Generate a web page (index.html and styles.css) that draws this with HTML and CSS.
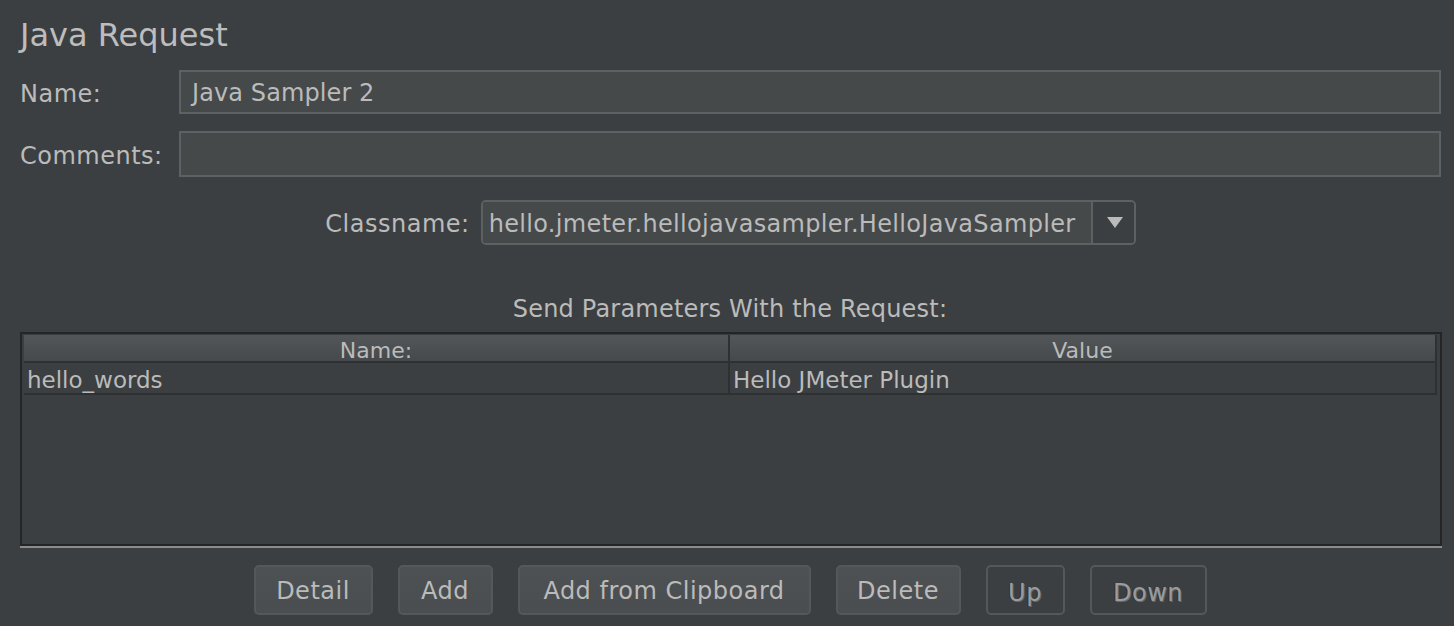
FILE: index.html
```html
<!DOCTYPE html>
<html lang="en">
<head>
<meta charset="utf-8">
<title>Java Request</title>
<link rel="stylesheet" href="styles.css">
</head>
<body>
<div class="page">
  <h1 class="title">Java Request</h1>
  <div class="field-row first">
    <label class="field-label">Name:</label>
    <div class="text-input">Java Sampler 2</div>
  </div>
  <div class="field-row second">
    <label class="field-label">Comments:</label>
    <div class="text-input tall"></div>
  </div>
  <div class="class-row">
    <label class="field-label">Classname:</label>
    <div class="combo">
      <div class="combo-value">hello.jmeter.hellojavasampler.HelloJavaSampler</div>
      <div class="combo-arrow">
        <svg width="16" height="11" viewBox="0 0 16 11"><polygon points="0,0 16,0 8,11" fill="#bbbbbb"/></svg>
      </div>
    </div>
  </div>
  <div class="section-title">Send Parameters With the Request:</div>
  <div class="table">
    <div class="thead">
      <div class="th">Name:</div>
      <div class="th">Value</div>
    </div>
    <div class="tr">
      <div class="td">hello_words</div>
      <div class="td">Hello JMeter Plugin</div>
    </div>
  </div>
  <div class="buttons">
    <div class="btn w-detail">Detail</div>
    <div class="btn w-add">Add</div>
    <div class="btn w-clip">Add from Clipboard</div>
    <div class="btn w-delete">Delete</div>
    <div class="btn disabled w-up">Up</div>
    <div class="btn disabled w-down">Down</div>
  </div>
</div>
</body>
</html>
```

FILE: styles.css
```css
* { box-sizing: border-box; }
html, body {
  margin: 0;
  padding: 0;
  background: #3c3f41;
}
body {
  font-family: "DejaVu Sans", "Liberation Sans", sans-serif;
  color: #bbbbbb;
  font-size: 24px;
  width: 1454px;
  height: 626px;
  overflow: hidden;
}
.page {
  padding: 15px 12px 0 20px;
}
.title {
  margin: 0;
  font-size: 32px;
  font-weight: normal;
  line-height: 40px;
  color: #bdbdbd;
}
.field-row {
  display: grid;
  grid-template-columns: 159px 1fr;
  align-items: center;
}
.field-row.first { margin-top: 15px; }
.field-row.second { margin-top: 17px; }
.field-label {
  line-height: 30px;
  padding-top: 4px;
  white-space: nowrap;
  letter-spacing: 0.5px;
}
.text-input {
  height: 44px;
  margin-right: 1px;
  background: #45494a;
  border: 2px solid #5e6163;
  padding: 3px 0 0 11px;
  line-height: 36px;
  color: #bbbbbb;
  letter-spacing: 0.1px;
}
.text-input.tall { height: 46px; }
.class-row {
  margin-top: 23px;
  display: flex;
  justify-content: center;
  align-items: center;
  gap: 11px;
  padding-right: 1px;
}
.class-row .field-label { padding-top: 2px; }
.combo {
  width: 655px;
  height: 45px;
  display: flex;
  border: 2px solid #5e6163;
  border-radius: 5px;
  overflow: hidden;
}
.combo-value {
  flex: 1;
  background: #45494a;
  padding: 3px 0 0 6px;
  line-height: 38px;
  white-space: nowrap;
  overflow: hidden;
  letter-spacing: 0.33px;
}
.combo-arrow {
  width: 43px;
  border-left: 2px solid #5e6163;
  background: #3c3f41;
  display: flex;
  align-items: center;
  justify-content: center;
  padding-left: 3px;
}
.section-title {
  margin-top: 49px;
  line-height: 30px;
  text-align: center;
  padding-right: 2px;
  letter-spacing: 0.2px;
}
.table {
  margin-top: 8px;
  height: 214px;
  border: 2px solid #232526;
  padding: 1px 3px 0 2px;
  box-shadow: 0 2px 0 #8c8c8c;
}
.thead, .tr {
  display: grid;
  grid-template-columns: 706px 1fr;
}
.thead {
  height: 28px;
  background: linear-gradient(#525658, #45494b);
  border-bottom: 2px solid #2e3031;
}
.th {
  font-size: 22px;
  line-height: 26px;
  padding-top: 3px;
  text-align: center;
  border-right: 2px solid #2e3031;
}
.tr {
  height: 32px;
  border-bottom: 2px solid #2e3031;
}
.td {
  font-size: 23px;
  line-height: 30px;
  padding: 2px 0 0 3px;
  border-right: 2px solid #2e3031;
}
.buttons {
  margin-top: 19px;
  display: flex;
  justify-content: center;
  gap: 25px;
  padding-right: 2px;
}
.btn {
  height: 50px;
  border: 2px solid #55585a;
  border-radius: 5px;
  background: linear-gradient(#4d5153, #4a4e50);
  text-align: center;
  line-height: 46px;
  padding-top: 1px;
  color: #bbbbbb;
  white-space: nowrap;
  letter-spacing: 0.5px;
}
.btn.disabled {
  background: #3c3f41;
  color: #9a9c9e;
  padding-top: 3px;
  text-shadow: 1px 1px 0 #66696b, -1px 0 0 #2f3133;
}
.w-detail { width: 119px; }
.w-add { width: 95px; }
.w-clip { width: 293px; }
.w-delete { width: 125px; }
.w-up { width: 79px; }
.w-down { width: 117px; }
```
